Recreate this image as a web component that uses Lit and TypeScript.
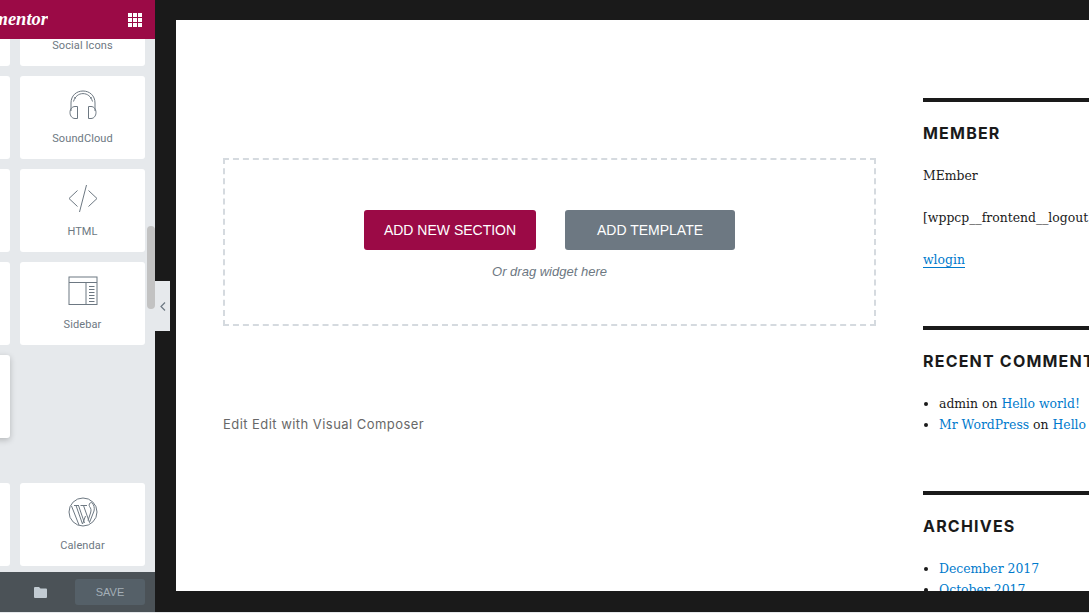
import { LitElement, html, css, svg } from "lit";
import { customElement } from "lit/decorators.js";

const icons: Record<string, unknown> = {
  headphones: svg`<path d="M3 21 V13 C3 5.500 8.500 1 15 1 C21.500 1 27 5.500 27 13 V21"/><path d="M5.500 11.500 C7 6.500 10.500 3.600 15 3.600 C19.500 3.600 23 6.500 24.500 11.500"/><path d="M6 7.500 L7.500 8.500 M24 7.500 L22.500 8.500"/><path d="M7 16.500 H9.500 V28.500 H7 C4.200 28.500 2 26 2 22.500 C2 19 4.200 16.500 7 16.500 Z"/><path d="M23 16.500 H20.500 V28.500 H23 C25.800 28.500 28 26 28 22.500 C28 19 25.800 16.500 23 16.500 Z"/>`,
  html: svg`<path d="M9.500 7.500 L1 15.500 L9.500 23.500"/><path d="M20.500 7.500 L29 15.500 L20.500 23.500"/><path d="M18.500 2 L11.500 29"/>`,
  sidebar: svg`<rect x="1" y="1" width="28" height="27.500"/><path d="M1 6.500 H29"/><path d="M18 6.500 V28.500"/><path d="M21 10.500 H26.500 M21 13.500 H26.500 M21 16.500 H26.500 M21 19.500 H26.500 M21 22.500 H26.500 M21 25.500 H26.500"/>`,
  wp: svg`<circle cx="15" cy="15" r="14"/><path d="M3.500 9 L11 28 M6 8.500 H11 M8 8.500 L14.500 27 L17.500 19 M12.500 8.500 H19 M15.500 8.500 L21.500 25.500 L26 14 C26.800 11 26 7.500 23.500 5.500 C21.500 5.500 20.500 8 21.500 9.500 C23 11.500 23.500 13 22.500 16 L20 23.500"/><path d="M10.500 8.500 L16.500 26"/>`,
};

@customElement("app-root")
export class AppRoot extends LitElement {
  static styles = css`
    :host { display: block; height: 613px; background: #e6e9ec; overflow: hidden; }
    .root { display: flex; height: 612px; position: relative; }

    .panel { flex: none; width: 155px; display: flex; flex-direction: column; background: #e6e9ec; position: relative; }
    .head { flex: none; height: 39px; background: #9b0a46; display: flex; align-items: center; justify-content: space-between; padding-right: 13px; position: relative; z-index: 1; }
    .logo { width: 48px; display: flex; justify-content: flex-end; overflow: hidden; color: #fff; font: italic 700 18.500px "Liberation Serif", serif; white-space: nowrap; }
    .apps { display: grid; grid-template-columns: repeat(3, 4px); grid-auto-rows: 4px; gap: 1px; }
    .apps i { background: #fff; }

    .list { flex: 1; min-height: 0; overflow: hidden; }
    .cards { display: grid; grid-template-columns: 125px 125px; grid-auto-rows: 83px; gap: 10px; margin-left: -115px; }
    .cards.first { margin-top: -56px; }
    .cards.last { margin-top: 45px; }
    .card { background: #fff; border-radius: 3px; display: flex; flex-direction: column; align-items: center; padding-top: 14px; box-sizing: border-box; color: #6d7882; font: 400 11px/14px Roboto, sans-serif; letter-spacing: 0.1px; }
    .card.lift { box-shadow: 0 2px 6px rgba(0, 0, 0, 0.22); }
    .card.top { justify-content: flex-end; padding-bottom: 13px; }
    .card svg { width: 30px; height: 30px; fill: none; stroke: #6d7882; stroke-width: 1; margin-bottom: 12px; display: block; }

    .foot { flex: none; height: 40px; background: #4b5257; display: flex; align-items: center; justify-content: flex-end; padding-right: 10px; gap: 28px; box-sizing: border-box; }
    .foot svg { width: 13px; height: 11px; fill: #c2cbd2; display: block; }
    .save { width: 70px; height: 26px; border-radius: 3px; background: #556068; color: #a4afb7; font: 400 11px/26px "Liberation Sans", sans-serif; text-align: center; }

    .thumb { position: absolute; right: 0; top: 226px; width: 8px; height: 83px; border-radius: 4px; background: #c2c2c2; }
    .toggle { position: absolute; left: 155px; top: 281px; width: 15px; height: 50px; background: #e6e9ec; display: flex; align-items: center; justify-content: center; }
    .toggle svg { width: 6px; height: 9px; fill: none; stroke: #6d7882; stroke-width: 1.200; }

    .preview { flex: 1; min-width: 0; background: #1a1a1a; padding: 20px 0 21px 21px; display: flex; box-sizing: border-box; }
    .page { flex: 1; min-width: 0; background: #fff; overflow: hidden; display: flex; padding-left: 47px; gap: 47px; }

    .main { flex: none; width: 653px; padding-top: 138px; }
    .drop { height: 168px; box-sizing: border-box; border: 2px dashed #d5dadf; display: flex; flex-direction: column; align-items: center; padding-top: 50px; }
    .btns { display: flex; gap: 29px; }
    .btn { height: 40px; border-radius: 3px; color: #fff; font: 400 14px/40px "Liberation Sans", sans-serif; text-align: center; }
    .btn.add { width: 172px; background: #9b0a46; }
    .btn.tpl { width: 170px; background: #6d7882; }
    .hint { margin-top: 14px; color: #6d7882; font: italic 400 13px/16px "Liberation Sans", sans-serif; }
    .edit { margin-top: 90px; color: #686868; font: 400 13px/16px Inter, sans-serif; letter-spacing: 0.45px; }

    .side { flex: none; width: 300px; padding-top: 78px; color: #1a1a1a; font: 400 13.800px/21px "DejaVu Serif Condensed", "DejaVu Serif", serif; font-stretch: condensed; white-space: nowrap; }
    .widget { border-top: 4px solid #1a1a1a; padding-top: 20px; margin-bottom: 56px; }
    h2 { margin: 0 0 21px; font: 700 16px/22px Inter, sans-serif; letter-spacing: 1.2px; color: #1a1a1a; }
    p { margin: 0 0 21px; }
    a { color: #007acc; text-decoration: none; }
    a.line { border-bottom: 1px solid #007acc; }
    ul { margin: 0; padding-left: 16px; }
  `;

  private card(icon: string, label: string) {
    return html`<div class="card"><svg viewBox="0 0 30 30">${icons[icon]}</svg>${label}</div>`;
  }

  render() {
    return html`
      <div class="root">
        <div class="panel">
          <div class="head">
            <div class="logo"><span>elementor</span></div>
            <div class="apps">${Array.from({ length: 9 }, () => html`<i></i>`)}</div>
          </div>
          <div class="list">
            <div class="cards first">
              <div class="card"></div><div class="card top">Social Icons</div>
              <div class="card"></div>${this.card("headphones", "SoundCloud")}
              <div class="card"></div>${this.card("html", "HTML")}
              <div class="card"></div>${this.card("sidebar", "Sidebar")}
              <div class="card lift"></div>
            </div>
            <div class="cards last">
              <div class="card"></div>${this.card("wp", "Calendar")}
            </div>
          </div>
          <div class="foot">
            <svg viewBox="0 0 13 11"><path d="M0 1 Q0 0 1 0 H5 L6.500 1.500 H12 Q13 1.500 13 2.500 V10 Q13 11 12 11 H1 Q0 11 0 10 Z"/></svg>
            <div class="save">SAVE</div>
          </div>
          <div class="thumb"></div>
        </div>
        <div class="toggle"><svg viewBox="0 0 6 9"><path d="M5 0.500 L1 4.500 L5 8.500"/></svg></div>
        <div class="preview">
          <div class="page">
            <div class="main">
              <div class="drop">
                <div class="btns">
                  <div class="btn add">ADD NEW SECTION</div>
                  <div class="btn tpl">ADD TEMPLATE</div>
                </div>
                <div class="hint">Or drag widget here</div>
              </div>
              <div class="edit">Edit Edit with Visual Composer</div>
            </div>
            <div class="side">
              <div class="widget">
                <h2>MEMBER</h2>
                <p>MEmber</p>
                <p>[wppcp__frontend__logout]</p>
                <p><a class="line" href="#">wlogin</a></p>
              </div>
              <div class="widget">
                <h2>RECENT COMMENTS</h2>
                <ul>
                  <li>admin on <a href="#">Hello world!</a></li>
                  <li><a href="#">Mr WordPress</a> on <a href="#">Hello world!</a></li>
                </ul>
              </div>
              <div class="widget">
                <h2>ARCHIVES</h2>
                <ul>
                  <li><a href="#">December 2017</a></li>
                  <li><a href="#">October 2017</a></li>
                </ul>
              </div>
            </div>
          </div>
        </div>
      </div>
    `;
  }
}
